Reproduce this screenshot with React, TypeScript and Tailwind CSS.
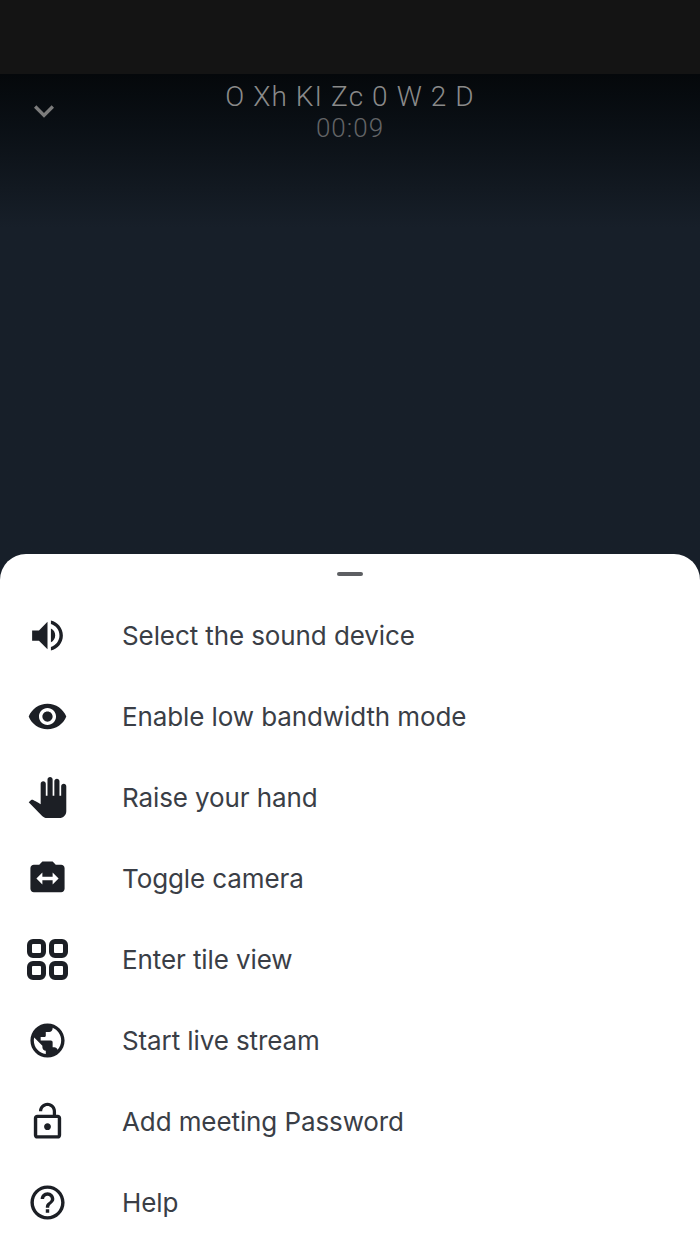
import React from "react";
import {
  MdVolumeUp,
  MdVisibility,
  MdPanTool,
  MdSwitchCamera,
  MdPublic,
  MdLockOpen,
  MdHelpOutline,
  MdKeyboardArrowDown,
} from "react-icons/md";

function TileIcon({ className }: { className?: string }) {
  return (
    <svg viewBox="0 0 41 41" className={className} fill="none" stroke="currentColor" strokeWidth="5">
      <rect x="2.5" y="2.5" width="14" height="14" rx="3.5" />
      <rect x="24.5" y="2.5" width="14" height="14" rx="3.5" />
      <rect x="2.5" y="24.5" width="14" height="14" rx="3.5" />
      <rect x="24.5" y="24.5" width="14" height="14" rx="3.5" />
    </svg>
  );
}

const items = [
  { label: "Select the sound device", Icon: MdVolumeUp },
  { label: "Enable low bandwidth mode", Icon: MdVisibility },
  { label: "Raise your hand", Icon: MdPanTool },
  { label: "Toggle camera", Icon: MdSwitchCamera },
  { label: "Enter tile view", Icon: TileIcon },
  { label: "Start live stream", Icon: MdPublic },
  { label: "Add meeting Password", Icon: MdLockOpen },
  { label: "Help", Icon: MdHelpOutline },
];

export default function App() {
  return (
    <div className="flex h-[1244px] w-[700px] flex-col overflow-hidden bg-[#171f29] font-['Inter','Liberation_Sans',sans-serif]">
      <div className="h-[74px] shrink-0 bg-[#141414]" />
      <div className="h-[480px] shrink-0 bg-gradient-to-b from-[#05080b] to-[#171f29] to-[32%]">
        <div className="relative flex flex-col items-center pt-[6px]">
          <MdKeyboardArrowDown className="absolute left-[24px] top-[17px] h-[40px] w-[40px] text-[#7c7c7c]" />
          <div className="font-['Roboto',sans-serif] text-[28px] font-light leading-[33px] tracking-[1.1px] text-[#8a8a8a]">O Xh KI Zc 0 W 2 D</div>
          <div className="font-['Roboto',sans-serif] text-[26px] font-light leading-[30px] tracking-[1px] text-[#626466]">00:09</div>
        </div>
      </div>
      <div className="flex-1 rounded-t-[26px] bg-white">
        <div className="flex h-[41px] items-start justify-center pt-[18px]">
          <div className="h-[4px] w-[26px] rounded-full bg-[#5d5f63]" />
        </div>
        {items.map(({ label, Icon }) => (
          <div key={label} className="flex h-[81px] items-center pl-[27px]">
            <Icon className="h-[41px] w-[41px] shrink-0 text-[#1c1f25]" />
            <span className="ml-[54px] text-[26px] leading-[32px] tracking-[-0.1px] text-[#3a3e46]">{label}</span>
          </div>
        ))}
      </div>
    </div>
  );
}
